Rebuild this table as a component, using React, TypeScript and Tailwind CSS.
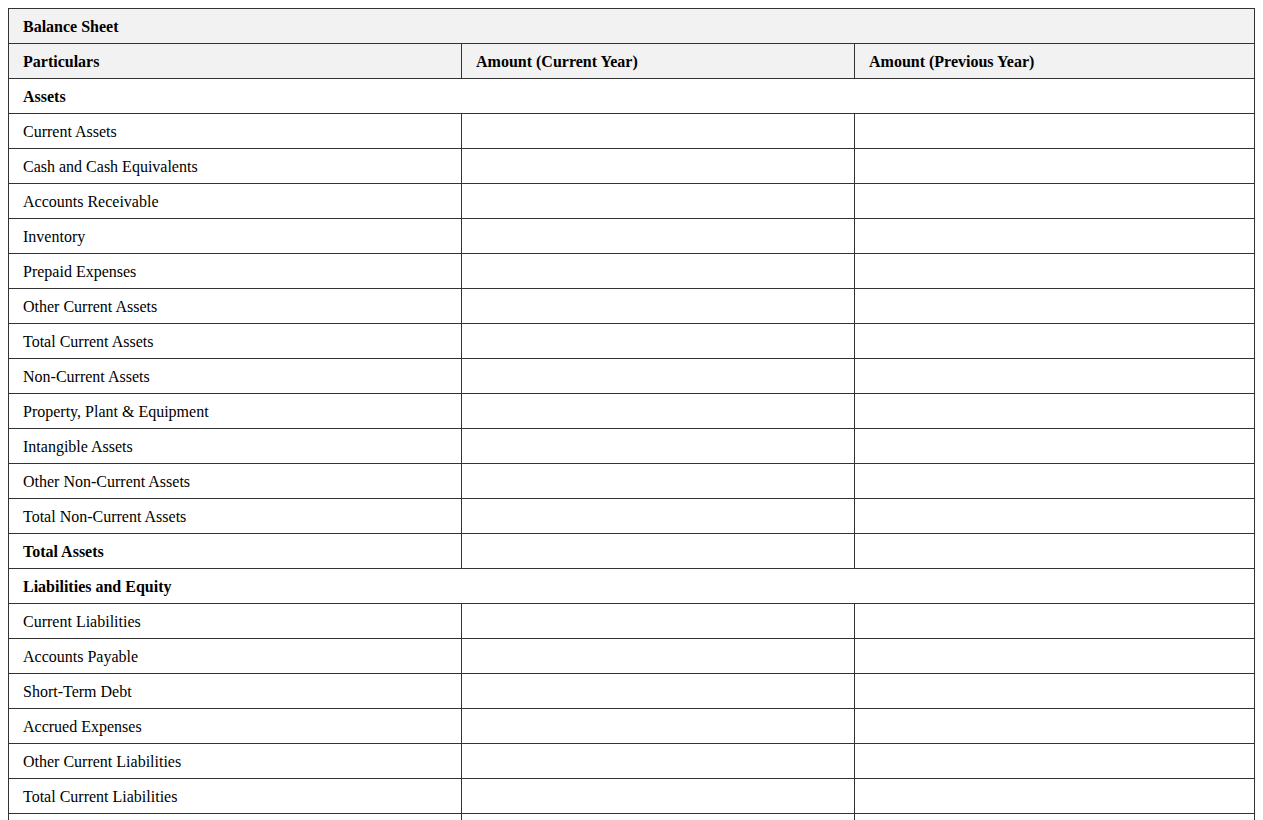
import React from "react";

type Row = { label: string; kind?: "section" | "bold" };

const rows: Row[] = [
  { label: "Assets", kind: "section" },
  { label: "Current Assets" },
  { label: "Cash and Cash Equivalents" },
  { label: "Accounts Receivable" },
  { label: "Inventory" },
  { label: "Prepaid Expenses" },
  { label: "Other Current Assets" },
  { label: "Total Current Assets" },
  { label: "Non-Current Assets" },
  { label: "Property, Plant & Equipment" },
  { label: "Intangible Assets" },
  { label: "Other Non-Current Assets" },
  { label: "Total Non-Current Assets" },
  { label: "Total Assets", kind: "bold" },
  { label: "Liabilities and Equity", kind: "section" },
  { label: "Current Liabilities" },
  { label: "Accounts Payable" },
  { label: "Short-Term Debt" },
  { label: "Accrued Expenses" },
  { label: "Other Current Liabilities" },
  { label: "Total Current Liabilities" },
  { label: "Non-Current Liabilities" },
  { label: "Long-Term Debt" },
  { label: "Deferred Tax Liabilities" },
  { label: "Other Non-Current Liabilities" },
  { label: "Total Non-Current Liabilities" },
  { label: "Total Liabilities", kind: "bold" },
  { label: "Equity" },
  { label: "Share Capital" },
  { label: "Retained Earnings" },
  { label: "Total Equity" },
  { label: "Total Liabilities and Equity", kind: "bold" },
];

const cell = "border border-[#333] px-[14px] pt-[9px] pb-[7px] text-left align-middle leading-[18px]";

export default function App() {
  return (
    <div className="p-2 bg-white text-black text-[16px]" style={{ fontFamily: '"Liberation Serif", "Times New Roman", serif' }}>
      <table className="w-full border-collapse">
        <colgroup>
          <col className="w-[453px]" />
          <col className="w-[393px]" />
          <col />
        </colgroup>
        <thead>
          <tr className="bg-[#f2f2f2]">
            <th colSpan={3} className={`${cell} font-bold`}>Balance Sheet</th>
          </tr>
          <tr className="bg-[#f2f2f2]">
            <th className={`${cell} font-bold`}>Particulars</th>
            <th className={`${cell} font-bold`}>Amount (Current Year)</th>
            <th className={`${cell} font-bold`}>Amount (Previous Year)</th>
          </tr>
        </thead>
        <tbody>
          {rows.map((r) =>
            r.kind === "section" ? (
              <tr key={r.label}>
                <td colSpan={3} className={`${cell} font-bold`}>{r.label}</td>
              </tr>
            ) : (
              <tr key={r.label}>
                <td className={`${cell} ${r.kind === "bold" ? "font-bold" : ""}`}>{r.label}</td>
                <td className={cell}></td>
                <td className={cell}></td>
              </tr>
            )
          )}
        </tbody>
      </table>
    </div>
  );
}
